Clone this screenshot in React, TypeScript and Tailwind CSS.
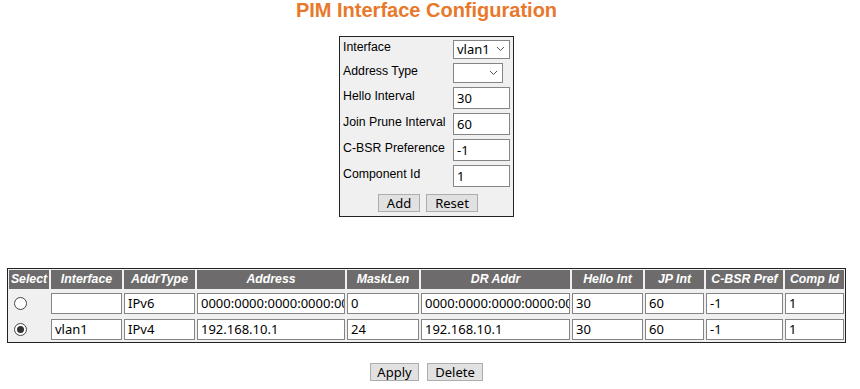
import React from "react";

const labelFont = { fontFamily: '"Liberation Sans", Arial, sans-serif' };
const inputFont = { fontFamily: '"Noto Sans", Tahoma, sans-serif' };

function Chevron() {
  return (
    <svg width="9" height="6" viewBox="0 0 9 6" className="shrink-0">
      <path d="M1 1 L4.5 4.5 L8 1" fill="none" stroke="#555" strokeWidth="1" />
    </svg>
  );
}

function FakeSelect({ value, width, height }: { value: string; width: string; height: string }) {
  return (
    <div
      className={`${width} ${height} bg-white border border-[#858585] flex items-center justify-between pl-[3px] pr-[4px] text-[13px] text-black`}
      style={inputFont}
    >
      <span className="leading-none">{value}</span>
      <Chevron />
    </div>
  );
}

function TextBox({ value, className }: { value: string; className: string }) {
  return (
    <input
      readOnly
      value={value}
      className={`${className} bg-white border border-[#858585] pl-[3px] text-[13px] text-black outline-none`}
      style={inputFont}
    />
  );
}

function FormRow({ label, h, children }: { label: string; h: string; children: React.ReactNode }) {
  return (
    <div className={`flex items-center ${h}`}>
      <div className="w-[110px] text-[12.3px] text-black pb-[4px] leading-[14px]" style={labelFont}>
        {label}
      </div>
      {children}
    </div>
  );
}

function Btn({ label, w }: { label: string; w: string }) {
  return (
    <div
      className={`${w} h-[18px] bg-[#e1e1e1] border border-[#adadad] flex items-center justify-center text-[13px] text-black leading-none`}
      style={inputFont}
    >
      {label}
    </div>
  );
}

function Radio({ checked }: { checked: boolean }) {
  return (
    <div className="w-[13px] h-[13px] rounded-full border border-[#444] bg-white flex items-center justify-center ml-[5px]">
      {checked && <div className="w-[7px] h-[7px] rounded-full bg-[#333]" />}
    </div>
  );
}

const headers = ["Select", "Interface", "AddrType", "Address", "MaskLen", "DR Addr", "Hello Int", "JP Int", "C-BSR Pref", "Comp Id"];

const rows = [
  { checked: false, vals: ["", "IPv6", "0000:0000:0000:0000:0000:0000:0000:0000", "0", "0000:0000:0000:0000:0000:0000:0000:0000", "30", "60", "-1", "1"] },
  { checked: true, vals: ["vlan1", "IPv4", "192.168.10.1", "24", "192.168.10.1", "30", "60", "-1", "1"] },
];

export default function App() {
  return (
    <div className="w-[853px] min-h-[389px] bg-white" style={labelFont}>
      <h1 className="text-center text-[20px] leading-[20px] font-bold text-[#e8792b]">
        PIM Interface Configuration
      </h1>

      <div className="mt-[16px] mx-auto w-[175px] h-[181px] border border-[#222] bg-[#f0f0f0] px-[3px]">
        <FormRow label="Interface" h="h-[24px]">
          <FakeSelect value="vlan1" width="w-[57px]" height="h-[19px]" />
        </FormRow>
        <FormRow label="Address Type" h="h-[24px]">
          <FakeSelect value="" width="w-[50px]" height="h-[20px]" />
        </FormRow>
        <FormRow label="Hello Interval" h="h-[26px]">
          <TextBox value="30" className="w-[57px] h-[22px]" />
        </FormRow>
        <FormRow label="Join Prune Interval" h="h-[26px]">
          <TextBox value="60" className="w-[57px] h-[22px]" />
        </FormRow>
        <FormRow label="C-BSR Preference" h="h-[26px]">
          <TextBox value="-1" className="w-[57px] h-[22px]" />
        </FormRow>
        <FormRow label="Component Id" h="h-[26px]">
          <TextBox value="1" className="w-[57px] h-[22px]" />
        </FormRow>
        <div className="h-[28px] flex items-center justify-center gap-[6px] pl-[3px]">
          <Btn label="Add" w="w-[42px]" />
          <Btn label="Reset" w="w-[52px]" />
        </div>
      </div>

      <div className="mt-[51px] mx-auto w-[839px] border border-[#222] bg-[#f0f0f0] p-[1px] grid grid-cols-[40px_71px_71px_148px_72px_149px_71px_59px_77px_59px] gap-[2px]">
        {headers.map((h) => (
          <div
            key={h}
            className="h-[19px] bg-[#6d6b6b] text-white font-bold italic text-[12.3px] flex items-center justify-center leading-none"
            style={labelFont}
          >
            {h}
          </div>
        ))}
        {rows.map((r, i) => (
          <React.Fragment key={i}>
            <div className="h-[24px] flex items-center">
              <Radio checked={r.checked} />
            </div>
            {r.vals.map((v, j) => (
              <div key={j} className="h-[24px] flex items-center">
                <TextBox value={v} className="w-full h-[21px] min-w-0" />
              </div>
            ))}
          </React.Fragment>
        ))}
      </div>

      <div className="mt-[20px] flex justify-center gap-[8px]">
        <Btn label="Apply" w="w-[49px]" />
        <Btn label="Delete" w="w-[56px]" />
      </div>
    </div>
  );
}
